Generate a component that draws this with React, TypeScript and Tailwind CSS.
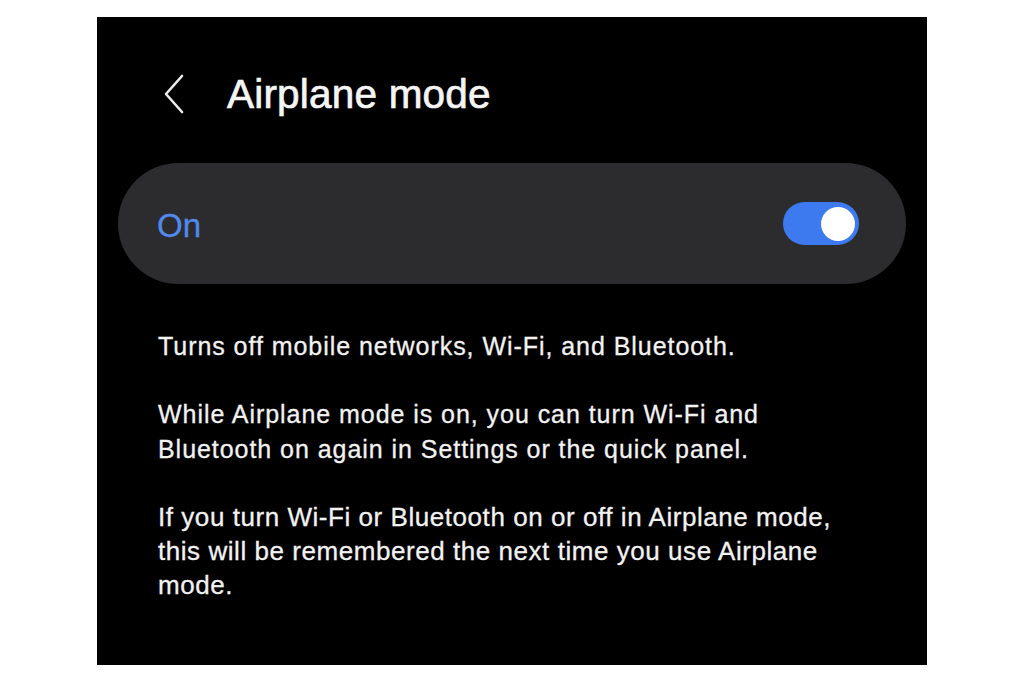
import React, { useState } from 'react'

const paragraphs = [
  'Turns off mobile networks, Wi-Fi, and Bluetooth.',
  'While Airplane mode is on, you can turn Wi-Fi and Bluetooth on again in Settings or the quick panel.',
]

const BackIcon = () => (
  <svg width="22" height="40" viewBox="0 0 22 40" fill="none" className="shrink-0">
    <polyline
      points="19,2 3,20 19,38"
      stroke="#ececec"
      strokeWidth="2.6"
      strokeLinecap="round"
      strokeLinejoin="round"
    />
  </svg>
)

const Toggle = ({ on, onChange }: { on: boolean; onChange: () => void }) => (
  <button
    onClick={onChange}
    className={`flex h-[43px] w-[76px] items-center rounded-full px-[4px] ${
      on ? 'justify-end bg-[#3d7af0]' : 'justify-start bg-[#5a5a5a]'
    }`}
  >
    <span className="block h-[34px] w-[34px] rounded-full bg-white" />
  </button>
)

export default function App() {
  const [enabled, setEnabled] = useState(true)

  return (
    <div className="min-h-[683px] bg-white pt-[17px] font-['Liberation_Sans',Arial,sans-serif]">
      <div className="mx-auto h-[648px] w-[830px] bg-black">
        {/* Header */}
        <div className="flex items-center gap-[42px] pl-[66px] pt-[57px]">
          <BackIcon />
          <h1 className="text-[40.5px] leading-[40px] tracking-[0.2px] text-[#f5f5f5] [-webkit-text-stroke:0.7px_#f5f5f5]">
            Airplane mode
          </h1>
        </div>

        {/* Master switch */}
        <div className="mx-[21px] mt-[49px] flex h-[121px] items-center justify-between rounded-full bg-[#2c2c2e] pl-[39px] pr-[47px]">
          <span className="pt-[3px] text-[33px] leading-none text-[#5189ec] [-webkit-text-stroke:0.3px_#5189ec]">
            {enabled ? 'On' : 'Off'}
          </span>
          <Toggle on={enabled} onChange={() => setEnabled(!enabled)} />
        </div>

        {/* Description */}
        <div className="pl-[61px] pr-[60px] pt-[45px] text-[#f2f2f2]">
          {paragraphs.map((text, i) => (
            <p
              key={i}
              className="mb-[33px] text-[25px] leading-[35px] tracking-[0.95px] [-webkit-text-stroke:0.3px_#f2f2f2]"
            >
              {text}
            </p>
          ))}
          <p className="mt-[3px] text-[26px] leading-[34px] tracking-[0.55px] [-webkit-text-stroke:0.3px_#f2f2f2]">
            If you turn Wi-Fi or Bluetooth on or off in Airplane mode, this will be remembered the next time you use Airplane mode.
          </p>
        </div>
      </div>
    </div>
  )
}
